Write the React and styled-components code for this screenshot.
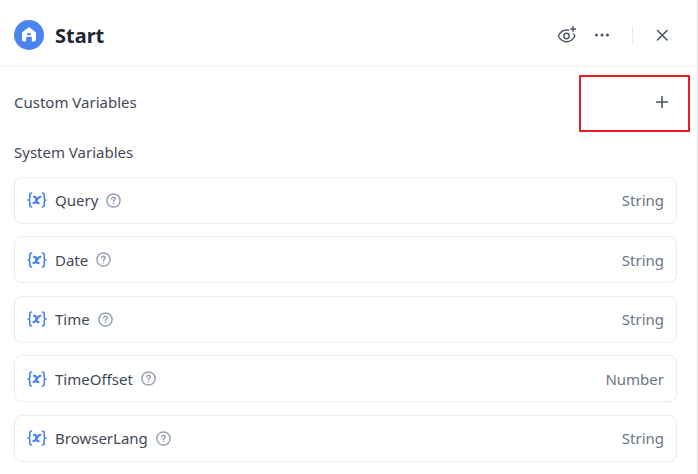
import React from 'react';
import styled, { createGlobalStyle } from 'styled-components';

const GlobalStyle = createGlobalStyle`
	html, body {
		margin: 0;
		padding: 0;
		background: #fff;
	}
	body {
		font-family: "Noto Sans", "Open Sans", sans-serif;
	}
`;

const Panel = styled.div`
	position: relative;
	box-sizing: border-box;
	width: 698px;
	height: 474px;
	overflow: hidden;
	background: #fff;
	border-right: 1px solid #e5e7eb;
`;

const Header = styled.header`
	display: flex;
	align-items: center;
	height: 67px;
	padding: 3px 28px 0 14px;
	box-sizing: border-box;
	border-bottom: 1px solid #f2f3f5;
`;

const BlockIcon = styled.div`
	display: flex;
	align-items: center;
	justify-content: center;
	width: 30px;
	height: 30px;
	border-radius: 50%;
	background: #4b83f0;
	margin-right: 11px;
`;

const Title = styled.h1`
	flex: 1;
	margin: 2px 0 0;
	font-size: 20px;
	font-weight: 700;
	line-height: 28px;
	color: #1f2733;
`;

const HeaderActions = styled.div`
	display: flex;
	align-items: center;
	color: #4a5365;
`;

const ActionIcon = styled.svg`
	display: block;
	margin-left: ${(p) => p.$gap || 0}px;
`;

const Divider = styled.div`
	width: 1px;
	height: 16px;
	margin: 0 22px 0 21px;
	background: #e5e7eb;
`;

const SectionRow = styled.div`
	display: flex;
	align-items: center;
	justify-content: space-between;
	height: 70px;
	padding: 0 28px 0 14px;
	box-sizing: border-box;
`;

const SectionLabel = styled.div`
	font-size: 15px;
	line-height: 20px;
	color: #3f4857;
`;

const SystemSection = styled.section`
	padding: 5px 20px 0 14px;
`;

const RowList = styled.div`
	display: flex;
	flex-direction: column;
	gap: 12.5px;
	margin-top: 14.6px;
`;

const VarRow = styled.div`
	display: flex;
	align-items: center;
	box-sizing: border-box;
	height: 47px;
	padding: 0 12px;
	border: 1px solid #eaecf0;
	border-radius: 8px;
	background: #fff;
`;

const VarName = styled.span`
	margin-left: 8px;
	font-size: 15px;
	line-height: 20px;
	color: #3f4857;
`;

const HelpIcon = styled.svg`
	display: block;
	margin-left: 8px;
	color: #98a2b3;
`;

const VarType = styled.span`
	margin-left: auto;
	font-size: 15px;
	line-height: 20px;
	color: #6b7585;
`;

const Highlight = styled.div`
	position: absolute;
	left: 579px;
	top: 75px;
	width: 111px;
	height: 57px;
	box-sizing: border-box;
	border: 2px solid #ec1c24;
`;

const VariableIcon = () => (
	<svg width="20" height="16" viewBox="0 0 20 16" fill="none" stroke="#4b83f0" strokeWidth="1.6" strokeLinecap="round" strokeLinejoin="round">
		<path d="M4.6 1C3 1 2.800 1.800 2.800 3v3.200c0 .9-.5 1.600-1.600 1.800 1.100.2 1.600.9 1.600 1.800V13c0 1.200.2 2 1.800 2" />
		<path d="M15.400 1c1.600 0 1.800.8 1.800 2v3.200c0 .9.5 1.600 1.600 1.800-1.100.2-1.600.9-1.600 1.800V13c0 1.200-.2 2-1.800 2" />
		<path d="M7 4.900h.9c.5 0 .8.3.9.8l1 4.600c.1.5.4.8.9.8h.9" strokeWidth="2.100" />
		<path d="M13.400 4.900c-1.700 0-2.800 1.700-3.600 3.100-.7 1.300-1.700 3.100-3.400 3.100" strokeWidth="2.100" />
	</svg>
);

const Help = () => (
	<HelpIcon width="15" height="15" viewBox="0 0 15 15" fill="none" stroke="currentColor" strokeWidth="1.5" strokeLinecap="round">
		<circle cx="7.500" cy="7.500" r="6.600" />
		<path d="M5.800 5.900c0-1 .8-1.600 1.700-1.600s1.700.6 1.700 1.500c0 1.200-1.700 1.300-1.700 2.600" />
		<path d="M7.500 10.600v.1" strokeWidth="1.600" />
	</HelpIcon>
);

const variables = [
	{ name: 'Query', type: 'String' },
	{ name: 'Date', type: 'String' },
	{ name: 'Time', type: 'String' },
	{ name: 'TimeOffset', type: 'Number' },
	{ name: 'BrowserLang', type: 'String' },
];

const App = () => (
	<Panel>
		<GlobalStyle />
		<Header>
			<BlockIcon>
				<svg width="18" height="18" viewBox="0 0 18 18">
					<path
						fill="#fff"
						fillRule="evenodd"
						d="M8 1.700a1.600 1.600 0 0 1 2 0l5.200 4c.5.4.8.9.8 1.500v6.400c0 1.100-.9 2-2 2h-2.200v-3.800c0-.6-.4-1-1-1H7.200c-.6 0-1 .4-1 1v3.800H4c-1.100 0-2-.9-2-2V7.200c0-.6.3-1.100.8-1.500zM7 7.200h4v1.700H7z"
					/>
				</svg>
			</BlockIcon>
			<Title>Start</Title>
			<HeaderActions>
				<ActionIcon width="20" height="20" viewBox="0 0 20 20" fill="none" stroke="currentColor" strokeWidth="1.400" strokeLinecap="round" strokeLinejoin="round">
					<path d="M11.500 5.200C7 4.500 3.300 7 1.300 11c2 3.700 5 5.700 8.200 5.700 3.400 0 6.500-2 8.400-5.700-.3-.7-.7-1.300-1.200-1.900" />
					<circle cx="9.500" cy="11" r="2.700" />
					<path d="M16 1.500v5M13.500 4h5" />
				</ActionIcon>
				<ActionIcon $gap={16} width="18" height="18" viewBox="0 0 18 18" fill="currentColor">
					<circle cx="3.500" cy="9" r="1.500" />
					<circle cx="9" cy="9" r="1.500" />
					<circle cx="14.500" cy="9" r="1.500" />
				</ActionIcon>
				<Divider />
				<ActionIcon width="14" height="14" viewBox="0 0 14 14" fill="none" stroke="currentColor" strokeWidth="1.600" strokeLinecap="round">
					<path d="M2.500 2.500l9.500 9.500M12 2.500l-9.500 9.500" />
				</ActionIcon>
			</HeaderActions>
		</Header>
		<SectionRow>
			<SectionLabel>Custom Variables</SectionLabel>
			<ActionIcon width="14" height="14" viewBox="0 0 14 14" fill="none" stroke="#4a5365" strokeWidth="1.600" strokeLinecap="round">
				<path d="M7 1.500v11M1.500 7h11" />
			</ActionIcon>
		</SectionRow>
		<SystemSection>
			<SectionLabel>System Variables</SectionLabel>
			<RowList>
				{variables.map((v) => (
					<VarRow key={v.name}>
						<VariableIcon />
						<VarName>{v.name}</VarName>
						<Help />
						<VarType>{v.type}</VarType>
					</VarRow>
				))}
			</RowList>
		</SystemSection>
		<Highlight />
	</Panel>
);

export default App;
